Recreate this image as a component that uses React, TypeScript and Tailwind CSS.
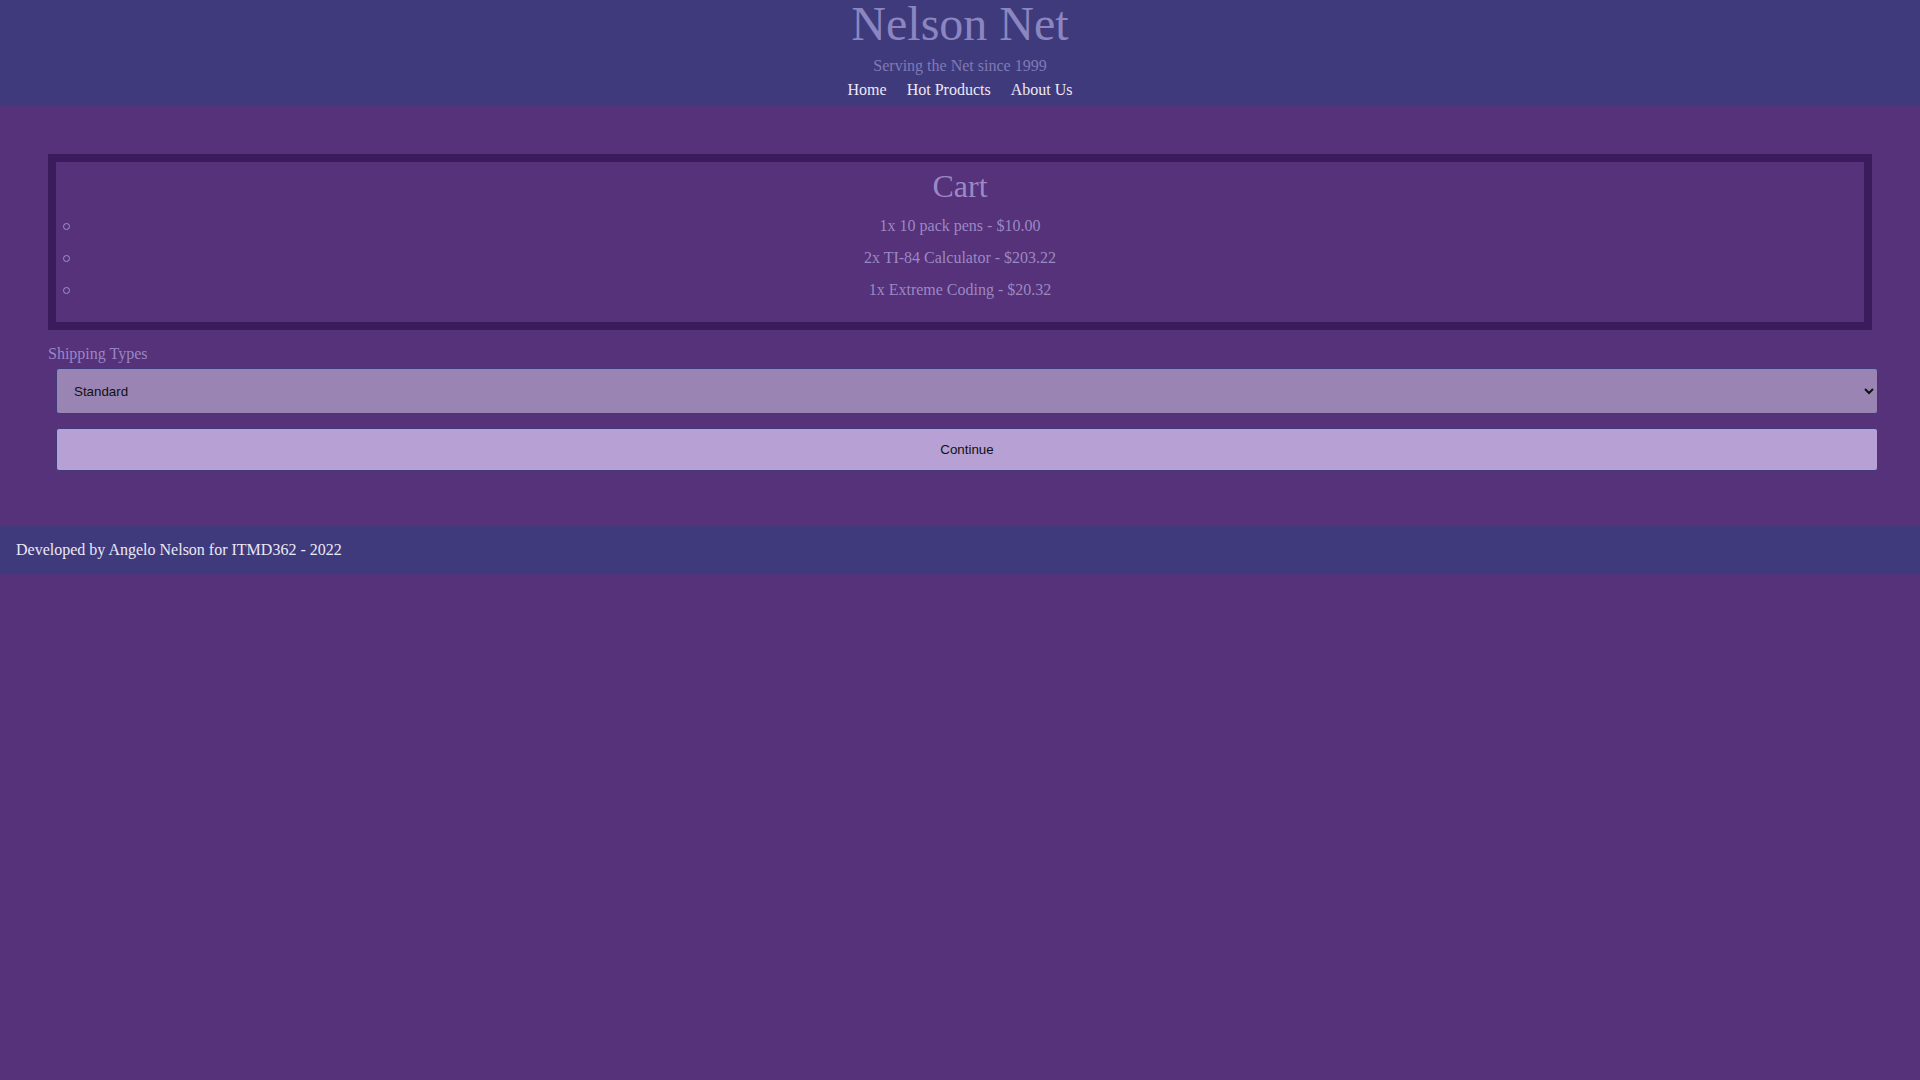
const CART = [
  "1x 10 pack pens - $10.00",
  "2x TI-84 Calculator - $203.22",
  "1x Extreme Coding - $20.32",
];

const NAV = ["Home", "Hot Products", "About Us"];

export default function App() {
  return (
    <div className="min-h-screen bg-[#553279] font-['Liberation_Serif',serif] text-[16px]">
      <header className="flex h-[106px] flex-col items-center bg-[#3f3a7c]">
        <h1 className="text-[48px] leading-[48px] text-[#8b86c0]">Nelson Net</h1>
        <p className="mt-[9px] leading-[18px] text-[#7f7ab6]">Serving the Net since 1999</p>
        <nav className="mt-[6px] flex gap-[20px] leading-[18px] text-[#ece8f7]">
          {NAV.map((item) => (
            <a key={item} href="#">
              {item}
            </a>
          ))}
        </nav>
      </header>

      <main className="px-[48px] pt-[48px] pb-[55px]">
        <section className="border-[8px] border-[#3b1b5b] pt-[6px] pb-[16px] text-[#9c88c4]">
          <h2 className="text-center text-[32px] leading-[37px]">Cart</h2>
          <ul className="mt-[5px]">
            {CART.map((item) => (
              <li key={item} className="flex items-center leading-[32px]">
                <span className="ml-[7px] h-[7px] w-[7px] shrink-0 rounded-full border border-[#a493cb]" />
                <span className="flex-1 text-center">{item}</span>
                <span className="mr-[7px] w-[7px] shrink-0" />
              </li>
            ))}
          </ul>
        </section>

        <label className="mt-[15px] block leading-[18px] text-[#9a86c6]">Shipping Types</label>
        <div className="flex flex-col gap-[14px] pt-[5px]">
          <select className="ml-[8px] h-[46px] w-[calc(100%-2px)] rounded-[3px] border border-[#3f3a7c] bg-[#9a84b4] pl-[13px] font-['Liberation_Sans',Arial,sans-serif] text-[13.33px] text-[#111]">
            <option>Standard</option>
            <option>Express</option>
            <option>Overnight</option>
          </select>
          <button className="ml-[8px] h-[43px] w-[calc(100%-2px)] rounded-[3px] border border-[#3f3a7c] bg-[#b7a0d3] font-['Liberation_Sans',Arial,sans-serif] text-[13.33px] text-[#111]">
            Continue
          </button>
        </div>
      </main>

      <footer className="flex h-[48px] items-center bg-[#3f3a7c] px-[16px] text-[#ece8f6]">
        Developed by Angelo Nelson for ITMD362 - 2022
      </footer>
    </div>
  );
}
